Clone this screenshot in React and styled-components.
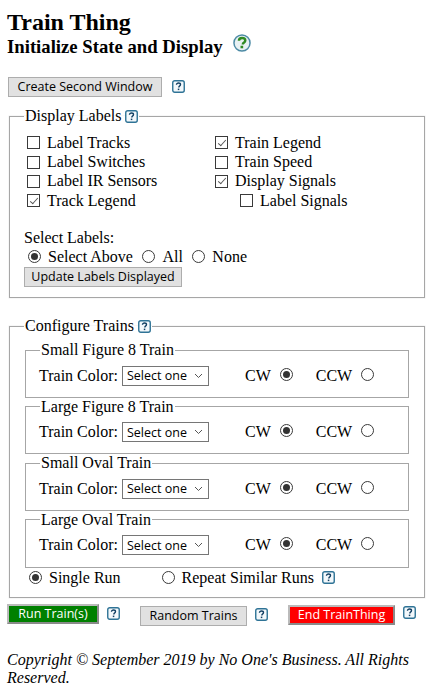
import React from "react";
import styled, { createGlobalStyle } from "styled-components";

const Global = createGlobalStyle`
  html, body { margin: 0; padding: 0; background: #fff; }
  body { font-family: "Liberation Serif", "Times New Roman", serif; font-size: 16px; color: #000; }
`;

const Page = styled.div`
  padding: 8px 11px 0 7px;
  width: 436px;
  height: 689px;
  box-sizing: border-box;
  overflow: hidden;
`;
const Title = styled.h1`
  margin: 0;
  font-size: 24px;
  line-height: 28px;
  font-weight: bold;
`;
const Subtitle = styled.h2`
  margin: 0;
  display: flex;
  align-items: flex-start;
  gap: 10px;
  font-size: 18.72px;
  line-height: 22px;
  font-weight: bold;
`;
const TopAction = styled.div`
  display: flex;
  align-items: center;
  gap: 10px;
  margin: 19px 0 0 1px;
`;
const Button = styled.button`
  box-sizing: border-box;
  height: ${p => p.$h || 20}px;
  width: ${p => p.$w}px;
  padding: 0;
  background: ${p => p.$bg || "#e1e1e1"};
  color: ${p => p.$fg || "#000"};
  border: ${p => p.$outset ? "2px solid" : "1px solid #adadad"};
  border-color: ${p => p.$outset ? "#bbb #8a8a8a #8a8a8a #bbb" : "#adadad"};
  font-family: "Open Sans", "Noto Sans", sans-serif;
  font-size: 12.5px;
  line-height: 16px;
  white-space: nowrap;
`;
const Box = styled.fieldset`
  margin: ${p => p.$m || "0"};
  padding: 0;
  box-sizing: border-box;
  min-width: 0;
  height: ${p => p.$h}px;
  border: 1px solid #a6a6a6;
  box-shadow: 0 0 0 0.5px #eee;
`;
const Legend = styled.legend`
  padding: 0 1px;
  margin-left: ${p => p.$ml || 14}px;
  display: flex;
  align-items: center;
  gap: 4px;
  line-height: 18px;
`;
const CheckGrid = styled.div`
  display: grid;
  grid-template-columns: 188px 1fr;
  grid-auto-rows: 19.4px;
  padding: 8px 0 0 17px;
`;
const Opt = styled.label`
  display: flex;
  align-items: center;
  gap: ${p => p.$gap || 7}px;
  padding-left: ${p => p.$indent || 0}px;
  white-space: nowrap;
  line-height: 18px;
`;
const Check = styled.input.attrs({ type: "checkbox" })`
  appearance: none;
  margin: 0;
  width: 13px;
  height: 13px;
  border: 1px solid #3a3a3a;
  background: #fff;
  position: relative;
  flex: none;
  &:checked::after {
    content: "";
    position: absolute;
    left: 3.5px;
    top: 0.5px;
    width: 3px;
    height: 7px;
    border: solid #555;
    border-width: 0 1.2px 1.2px 0;
    transform: rotate(42deg);
  }
`;
const Radio = styled.input.attrs({ type: "radio" })`
  appearance: none;
  margin: 0;
  width: 13px;
  height: 13px;
  border: 1px solid #3a3a3a;
  border-radius: 50%;
  background: #fff;
  position: relative;
  flex: none;
  &:checked::after {
    content: "";
    position: absolute;
    inset: 2px;
    border-radius: 50%;
    background: #333;
  }
`;
const DirRadio = styled(Radio)`
  margin-bottom: 3px;
`;
const SelectHead = styled.div`
  margin: 17px 0 0 14px;
  line-height: 19px;
`;
const RadioRow = styled.div`
  display: flex;
  align-items: center;
  margin: 1px 0 1px 18px;
  gap: 9.5px;
  line-height: 18px;
`;
const UpdateWrap = styled.div`
  margin: 0 0 0 14px;
`;
const TrainBox = styled.fieldset`
  margin: 0 15px;
  padding: 0;
  box-sizing: border-box;
  min-width: 0;
  height: 56.67px;
  border: 1px solid #a6a6a6;
`;
const TrainList = styled.div`
  padding-top: 6px;
`;
const TrainRow = styled.div`
  display: flex;
  align-items: center;
  padding-left: 13px;
  margin-top: 6px;
  height: 21px;
`;
const Select = styled.select`
  appearance: none;
  box-sizing: border-box;
  width: 87px;
  height: 20px;
  margin: 0 36px 0 4px;
  padding: 0 0 0 4px;
  background: #fff url("data:image/svg+xml,%3Csvg xmlns='http://www.w3.org/2000/svg' width='9' height='6'%3E%3Cpath d='M1 1l3.5 3.5L8 1' fill='none' stroke='%23555' stroke-width='1'/%3E%3C/svg%3E") no-repeat right 5px center;
  border: 1px solid #767676;
  border-radius: 0;
  font-family: "Open Sans", "Noto Sans", sans-serif;
  font-size: 12.5px;
  color: #000;
`;
const Dir = styled.span`
  margin-right: 9px;
`;
const Spacer = styled.span`
  width: ${p => p.$w}px;
  flex: none;
`;
const RunRow = styled.div`
  display: flex;
  align-items: center;
  margin: 1px 0 0 19px;
  line-height: 18px;
`;
const Actions = styled.div`
  display: flex;
  align-items: flex-start;
  margin-top: 6px;
`;
const ActionCell = styled.div`
  display: flex;
  align-items: flex-start;
  gap: 8px;
  margin-top: ${p => p.$t || 0}px;
  width: ${p => p.$w}px;
  flex: none;
`;
const Copyright = styled.p`
  margin: 25px 0 0 0;
  font-style: italic;
  line-height: 18px;
`;

const HelpWrap = styled.svg`
  flex: none;
  display: block;
  margin-top: ${p => p.$t || 0}px;
`;
const BigHelpWrap = styled.svg`
  flex: none;
  display: block;
  margin-top: -2px;
`;
const Help = ({ t }) => (
  <HelpWrap $t={t} width="13" height="13" viewBox="0 0 13 13">
    <rect x="0.75" y="0.75" width="11.5" height="11.5" rx="2" fill="#f3f8fb" stroke="#2f7396" strokeWidth="1.4" />
    <path d="M4.5 4.7c0-1.1.9-1.7 2-1.7 1.2 0 2 .6 2 1.6 0 .8-.5 1.2-1 1.5-.4.3-.6.5-.6 1v.3" fill="none" stroke="#123f63" strokeWidth="1.4" />
    <rect x="5.8" y="8.6" width="1.5" height="1.5" fill="#123f63" />
  </HelpWrap>
);
const BigHelp = () => (
  <BigHelpWrap width="18" height="18" viewBox="0 0 17 17">
    <circle cx="8.5" cy="8.5" r="7.6" fill="#e8f1f3" stroke="#4d8ba5" strokeWidth="1.4" />
    <path d="M5.6 6.4c0-1.7 1.3-2.6 3-2.6s3 .9 3 2.3c0 1.1-.7 1.6-1.4 2.1-.6.4-.9.7-.9 1.4v.3" fill="none" stroke="#2f8a22" strokeWidth="2.3" />
    <rect x="7.1" y="11.1" width="2.5" height="2.4" fill="#2f8a22" />
  </BigHelpWrap>
);

const Train = ({ name }) => (
  <TrainBox>
    <Legend $ml={14}>{name}</Legend>
    <TrainRow>
      Train Color:
      <Select defaultValue="">
        <option value="">Select one</option>
      </Select>
      <Dir>CW</Dir>
      <DirRadio name={name} defaultChecked />
      <Spacer $w={23} />
      <Dir>CCW</Dir>
      <DirRadio name={name} />
    </TrainRow>
  </TrainBox>
);

export default function App() {
  return (
    <Page>
      <Global />
      <Title>Train Thing</Title>
      <Subtitle>Initialize State and Display <BigHelp /></Subtitle>
      <TopAction>
        <Button $w={154} $h={20}>Create Second Window</Button>
        <Help t={-2} />
      </TopAction>

      <Box $m="10px 0 0 2px" $h={191}>
        <Legend>Display Labels <Help /></Legend>
        <CheckGrid>
          <Opt><Check />Label Tracks</Opt>
          <Opt><Check defaultChecked />Train Legend</Opt>
          <Opt><Check />Label Switches</Opt>
          <Opt><Check />Train Speed</Opt>
          <Opt><Check />Label IR Sensors</Opt>
          <Opt><Check defaultChecked />Display Signals</Opt>
          <Opt><Check defaultChecked />Track Legend</Opt>
          <Opt $indent={25}><Check />Label Signals</Opt>
        </CheckGrid>
        <SelectHead>Select Labels:</SelectHead>
        <RadioRow>
          <Opt><Radio name="sel" defaultChecked />Select Above</Opt>
          <Opt><Radio name="sel" />All</Opt>
          <Opt><Radio name="sel" />None</Opt>
        </RadioRow>
        <UpdateWrap><Button $w={158}>Update Labels Displayed</Button></UpdateWrap>
      </Box>

      <Box $m="19px 0 0 2px" $h={281}>
        <Legend>Configure Trains <Help /></Legend>
        <TrainList>
          <Train name="Small Figure 8 Train" />
          <Train name="Large Figure 8 Train" />
          <Train name="Small Oval Train" />
          <Train name="Large Oval Train" />
        </TrainList>
        <RunRow>
          <Opt><Radio name="run" defaultChecked />Single Run</Opt>
          <Spacer $w={41} />
          <Opt><Radio name="run" />Repeat Similar Runs</Opt>
          <Spacer $w={8} />
          <Help />
        </RunRow>
      </Box>

      <Actions>
        <ActionCell $w={133}>
          <Button $w={92} $bg="#008000" $fg="#fff" $outset>Run Train(s)</Button>
          <Help t={3} />
        </ActionCell>
        <ActionCell $w={148} $t={2}>
          <Button $w={107}>Random Trains</Button>
          <Help t={2} />
        </ActionCell>
        <ActionCell $w={130} $t={1}>
          <Button $w={107} $bg="#ff0000" $fg="#fff" $outset>End TrainThing</Button>
          <Help t={1} />
        </ActionCell>
      </Actions>

      <Copyright>Copyright © September 2019 by No One's Business. All Rights Reserved.</Copyright>
    </Page>
  );
}
